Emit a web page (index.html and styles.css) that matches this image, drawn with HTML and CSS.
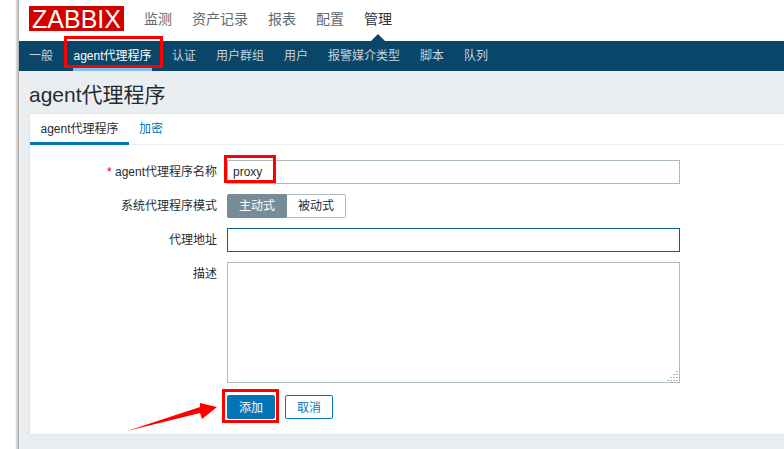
FILE: index.html
```html
<!DOCTYPE html>
<html>
<head>
    <title>agent代理程序</title>
    <meta charset="utf-8">
    <link rel="stylesheet" href="styles.css">
</head>
<body>
    <div class="sidebar"></div>
    <div class="page">
        <div class="header">
            <div class="logo">ZABBIX</div>
            <div class="top-nav">
                <a>监测</a>
                <a>资产记录</a>
                <a>报表</a>
                <a>配置</a>
                <a class="selected">管理</a>
            </div>
        </div>
        <div class="sub-nav">
            <a>一般</a>
            <a class="active">agent代理程序</a>
            <a>认证</a>
            <a>用户群组</a>
            <a>用户</a>
            <a>报警媒介类型</a>
            <a>脚本</a>
            <a>队列</a>
        </div>
        <div class="content">
            <h1>agent代理程序</h1>
            <div class="card">
                <div class="tabs">
                    <a class="active">agent代理程序</a>
                    <a>加密</a>
                </div>
                <form class="form">
                    <label><span class="required">*</span> agent代理程序名称</label>
                    <input class="text-input" type="text" value="proxy">

                    <label>系统代理程序模式</label>
                    <div class="radio-group">
                        <span class="on">主动式</span>
                        <span>被动式</span>
                    </div>

                    <label>代理地址</label>
                    <input class="text-input focused" type="text">

                    <label>描述</label>
                    <div class="area-wrap">
                        <textarea class="text-area"></textarea>
                        <i class="grip"></i>
                    </div>

                    <div class="buttons">
                        <button class="btn primary" type="button">添加</button>
                        <button class="btn" type="button">取消</button>
                    </div>
                </form>
            </div>
        </div>
    </div>

    <!-- red annotations drawn over the screenshot -->
    <div class="mark mark-nav"></div>
    <div class="mark mark-input"></div>
    <div class="mark mark-button"></div>
    <svg class="arrow" width="100" height="40" viewBox="0 0 100 40">
        <polygon points="7,31 80,7 80,3 97,7 82,19 80,13" fill="#f00"/>
    </svg>
</body>
</html>
```

FILE: styles.css
```css
* {
    box-sizing: border-box;
}

html, body {
    height: 100%;
}

body {
    margin: 0;
    display: flex;
    overflow: hidden;
    background-color: #fff;
    color: #1f2c33;
    font-family: "Liberation Sans", "Noto Sans CJK SC", sans-serif;
    font-size: 12px;
}

.sidebar {
    width: 19px;
    flex: none;
    background: linear-gradient(to right, #fff 15px, #e4e4e4 16px, #a8a8a8 19px);
}

.page {
    flex: 1;
    display: flex;
    flex-direction: column;
    min-width: 0;
}

.header {
    height: 41px;
    display: flex;
    padding: 6px 0 0 10px;
    background-color: #fff;
}

.logo {
    width: 95px;
    height: 25px;
    background-color: #d40000;
    color: #fff;
    font-size: 25px;
    line-height: 26px;
    text-align: center;
}

.top-nav {
    display: flex;
    gap: 20px;
    margin-left: 20px;
    font-size: 14px;
    line-height: 27px;
    color: #5d6a72;
}

.top-nav a {
    position: relative;
    height: 35px;
}

.top-nav .selected {
    color: #2a353b;
}

.top-nav .selected::after {
    content: "";
    position: absolute;
    left: 50%;
    bottom: 0;
    margin-left: -7px;
    border-left: 7px solid transparent;
    border-right: 7px solid transparent;
    border-bottom: 7px solid #0a466a;
}

.sub-nav {
    height: 30px;
    display: flex;
    gap: 20px;
    padding-left: 10px;
    background-color: #0a466a;
    color: #c4d3dc;
    line-height: 31px;
}

.sub-nav a {
    height: 30px;
}

.sub-nav .active {
    width: 79px;
    text-align: center;
    color: #fff;
    border-bottom: 4px solid #7dc4f2;
}

.content {
    flex: 1;
    padding-left: 10px;
    background-color: #ebeef0;
}

h1 {
    margin: 0;
    height: 42px;
    font-size: 21px;
    font-weight: normal;
    line-height: 47px;
    color: #1f2c33;
}

.card {
    height: 322px;
    background-color: #fff;
    border: 1px solid #dfe4e7;
    border-right: 0;
}

.tabs {
    height: 31px;
    display: flex;
    border-bottom: 1px solid #ebeef0;
    line-height: 30px;
    color: #0275b8;
}

.tabs a {
    height: 31px;
    padding: 0 10px;
}

.tabs .active {
    width: 99px;
    text-align: center;
    color: #1f2c33;
    border-bottom: 3px solid #0275b8;
}

.form {
    display: grid;
    grid-template-columns: 187px 453px;
    column-gap: 10px;
    row-gap: 10px;
    padding-top: 15px;
}

.form label {
    text-align: right;
    line-height: 24px;
    color: #1f2c33;
}

.required {
    color: #d40000;
}

.text-input {
    width: 100%;
    height: 24px;
    padding: 0 5px;
    background-color: #fff;
    border: 1px solid #acbbc3;
    border-radius: 0;
    outline: 0;
    color: #1f2c33;
    font: inherit;
}

.text-input.focused {
    border-color: #0a5a8c;
}

.radio-group {
    display: flex;
    height: 24px;
    line-height: 23px;
    text-align: center;
}

.radio-group span {
    width: 59px;
    border: 1px solid #acbbc3;
    border-left: 0;
    border-radius: 0 2px 2px 0;
}

.radio-group .on {
    width: 60px;
    background-color: #768d99;
    color: #fff;
    border: 1px solid #768d99;
    border-radius: 2px 0 0 2px;
}

.area-wrap {
    position: relative;
    height: 121px;
}

.text-area {
    display: block;
    width: 100%;
    height: 100%;
    resize: none;
    background-color: #fff;
    border: 1px solid #acbbc3;
    border-radius: 0;
    outline: 0;
    font: inherit;
}

/* resize handle, one dot plus its copies */
.grip {
    position: absolute;
    right: 2px;
    bottom: 2px;
    width: 2px;
    height: 1px;
    background-color: #b5b5b5;
    box-shadow: 0 -3px #b5b5b5, 0 -6px #b5b5b5, 0 -9px #b5b5b5,
        -3px 0 #b5b5b5, -3px -3px #b5b5b5, -3px -6px #b5b5b5,
        -6px 0 #b5b5b5, -6px -3px #b5b5b5,
        -9px 0 #b5b5b5;
}

.buttons {
    grid-column: 2;
    display: flex;
    gap: 10px;
    padding-top: 2px;
}

.btn {
    width: 48px;
    height: 24px;
    padding: 0 0 1px;
    background-color: #fff;
    border: 1px solid #0275b8;
    border-radius: 2px;
    color: #0275b8;
    font: inherit;
}

.btn.primary {
    background-color: #0275b8;
    color: #fff;
}

.mark {
    position: absolute;
    border: 3px solid #f00;
}

.mark-nav {
    left: 64px;
    top: 36px;
    width: 99px;
    height: 32px;
}

.mark-input {
    left: 224px;
    top: 155px;
    width: 52px;
    height: 28px;
}

.mark-button {
    left: 222px;
    top: 389px;
    width: 57px;
    height: 34px;
}

.arrow {
    position: absolute;
    left: 120px;
    top: 400px;
}
```
